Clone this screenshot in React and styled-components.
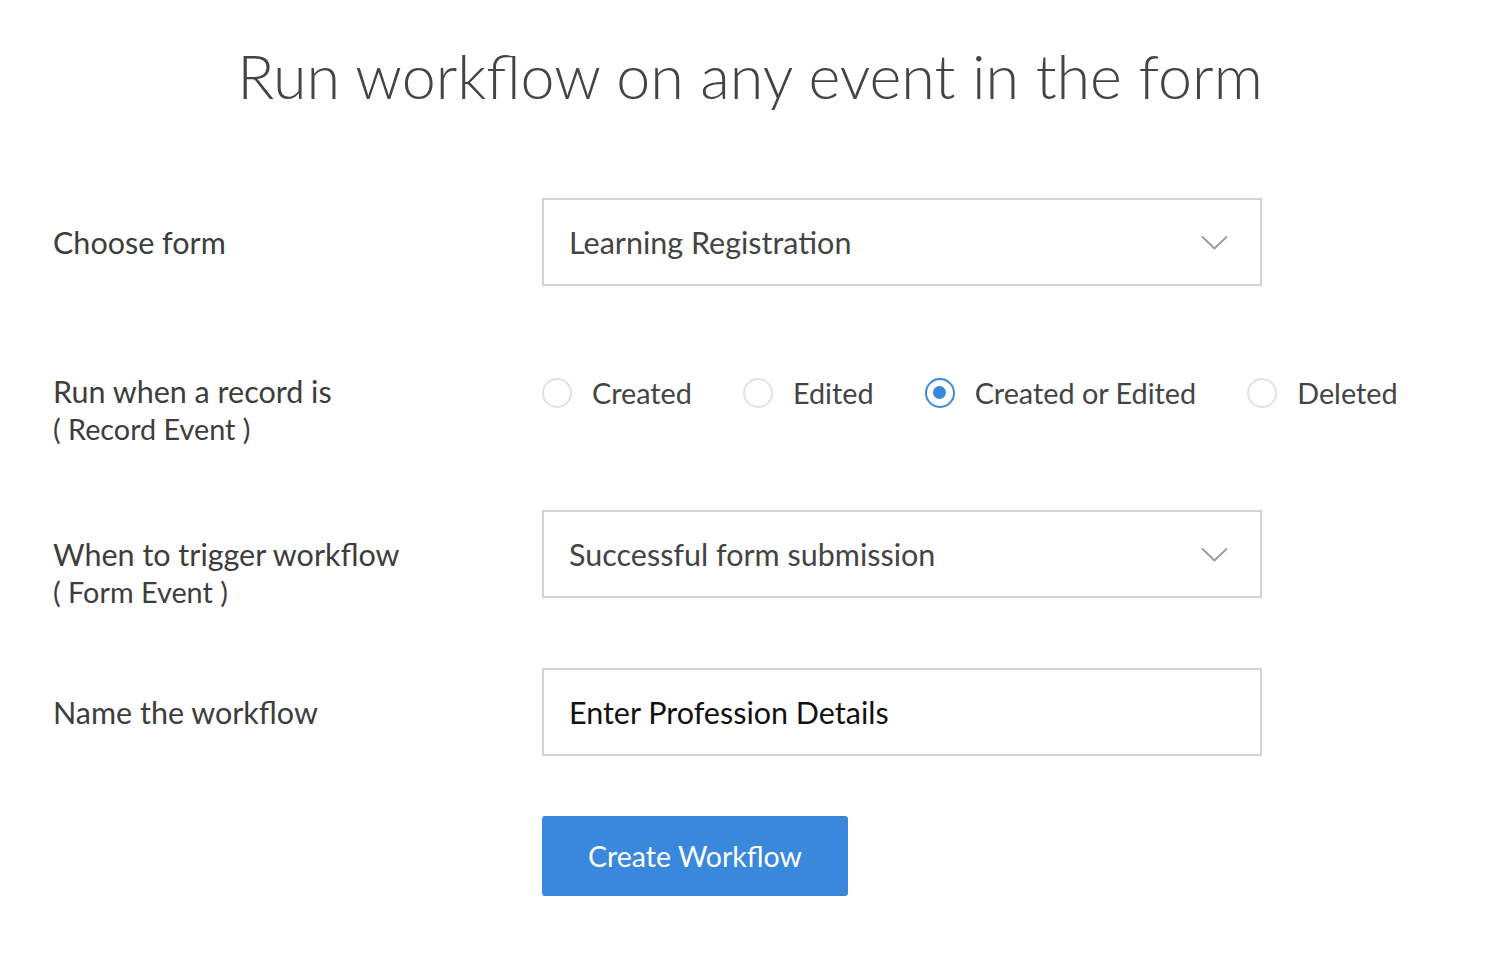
import React, { useState } from "react";
import styled, { createGlobalStyle } from "styled-components";

const Global = createGlobalStyle`
  html, body {
    margin: 0;
    padding: 0;
    background: #fff;
    font-family: Lato, "Open Sans", sans-serif;
  }
`;

const Page = styled.div`
  width: 1508px;
  height: 964px;
  box-sizing: border-box;
  padding: 38px 0 0 53px;
`;

const Title = styled.h1`
  margin: 0 8px 84px -53px;
  text-align: center;
  font-size: 61px;
  font-weight: 300;
  line-height: 76px;
  color: #444;
`;

const Row = styled.div`
  display: grid;
  grid-template-columns: 489px 720px;
  align-items: ${(p) => (p.$center ? "center" : "start")};
  margin-top: ${(p) => p.$top || 0}px;
`;

const Label = styled.div`
  font-size: 30.5px;
  line-height: 39px;
  color: #3d3d3d;
  padding-top: ${(p) => p.$pad || 0}px;
`;

const SubLabel = styled.div`
  font-size: 28.8px;
  margin-top: -1px;
`;

const Select = styled.div`
  height: 88px;
  box-sizing: border-box;
  border: 2px solid #d3d3d6;
  display: flex;
  align-items: center;
  justify-content: space-between;
  padding: 0 32px 0 25px;
  font-size: 30.5px;
  color: #444;
  cursor: pointer;
`;

const Input = styled.input`
  height: 88px;
  box-sizing: border-box;
  border: 2px solid #d3d3d6;
  padding: 0 25px;
  font-family: Lato, "Open Sans", sans-serif;
  font-size: 30.5px;
  color: #111;
  outline: none;
  width: 720px;
`;

const Radios = styled.div`
  display: flex;
  align-items: center;
  height: 39px;
  margin-top: 1px;
  white-space: nowrap;
`;

const RadioItem = styled.label`
  display: flex;
  align-items: center;
  margin-right: 51px;
  font-size: 28.8px;
  color: #444;
  cursor: pointer;
`;

const Circle = styled.span`
  width: 30px;
  height: 30px;
  box-sizing: border-box;
  border-radius: 50%;
  border: 2px solid ${(p) => (p.$on ? "#3a88db" : "#dde2e8")};
  display: inline-flex;
  align-items: center;
  justify-content: center;
  margin-right: 20px;
  &::after {
    content: "";
    width: 13px;
    height: 13px;
    border-radius: 50%;
    background: ${(p) => (p.$on ? "#3a88db" : "transparent")};
  }
`;

const Button = styled.button`
  margin-left: 489px;
  margin-top: 60px;
  width: 306px;
  height: 80px;
  border: none;
  border-radius: 3px;
  background: #3a88db;
  color: #fff;
  font-family: Lato, "Open Sans", sans-serif;
  font-size: 28.5px;
  cursor: pointer;
`;

const Chevron = () => (
  <svg width="27" height="15" viewBox="0 0 27 15" fill="none">
    <path d="M1 1.5 L13.5 13.5 L26 1.5" stroke="#9a9a9a" strokeWidth="1.8" />
  </svg>
);

const options = ["Created", "Edited", "Created or Edited", "Deleted"];

export default function App() {
  const [event, setEvent] = useState("Created or Edited");
  return (
    <Page>
      <Global />
      <Title>Run workflow on any event in the form</Title>
      <Row $center>
        <Label>Choose form</Label>
        <Select>
          Learning Registration
          <Chevron />
        </Select>
      </Row>
      <Row $top={86}>
        <Label>
          Run when a record is
          <SubLabel>( Record Event )</SubLabel>
        </Label>
        <Radios>
          {options.map((o) => (
            <RadioItem key={o} onClick={() => setEvent(o)}>
              <Circle $on={event === o} />
              {o}
            </RadioItem>
          ))}
        </Radios>
      </Row>
      <Row $top={61}>
        <Label $pad={25}>
          When to trigger workflow
          <SubLabel>( Form Event )</SubLabel>
        </Label>
        <Select>
          Successful form submission
          <Chevron />
        </Select>
      </Row>
      <Row $top={56} $center>
        <Label>Name the workflow</Label>
        <Input defaultValue="Enter Profession Details" />
      </Row>
      <Button>Create Workflow</Button>
    </Page>
  );
}
